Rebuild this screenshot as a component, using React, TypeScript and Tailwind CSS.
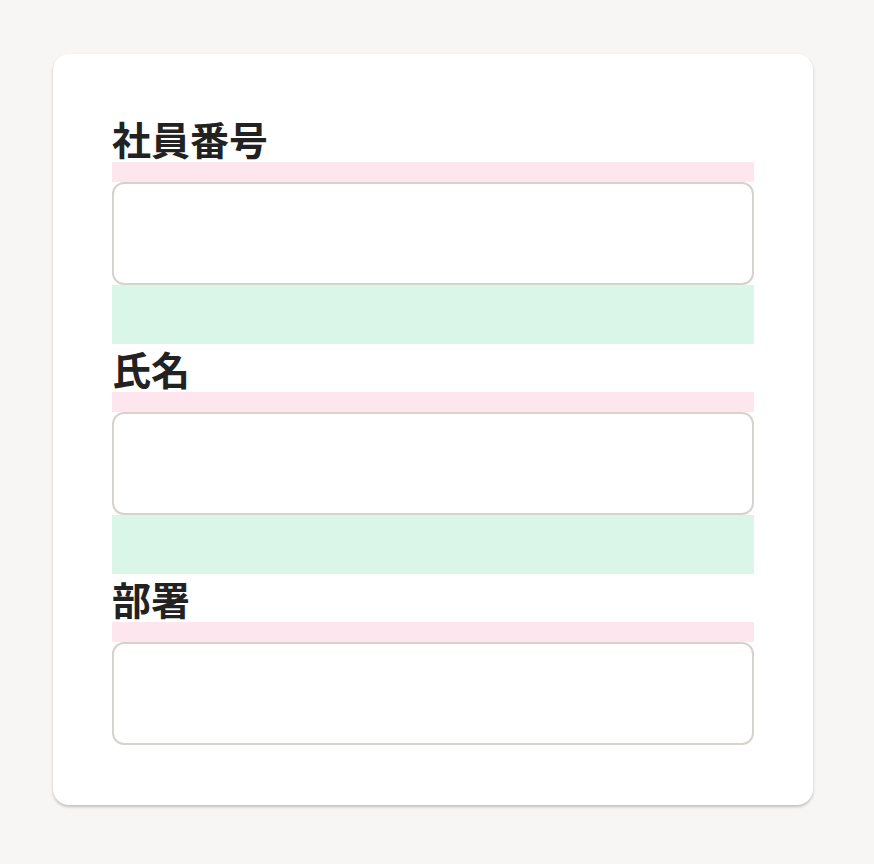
export default function App() {
  const fields = ['社員番号', '氏名', '部署']

  return (
    <div className="min-h-[864px] bg-[#f7f6f4] pt-[54px] pl-[53px]" style={{ fontFamily: '"Noto Sans CJK JP", "Noto Sans", sans-serif' }}>
      <div className="w-[760px] rounded-2xl bg-white px-[59px] py-[60px] shadow-[0_2px_3px_rgba(0,0,0,0.22)]">
        {fields.map((label, i) => (
          <div key={label}>
            {i > 0 && <div className="h-[59px] bg-[#d9f6e8]" />}
            <div className="pt-px text-[39px] font-bold leading-[47px] text-[#222222]">{label}</div>
            <div className="h-[20px] bg-[#fde6ed]" />
            <input
              type="text"
              className="block h-[103px] w-full rounded-xl border-2 border-[#d6d2ce] bg-white px-4 outline-none"
            />
          </div>
        ))}
      </div>
    </div>
  )
}
